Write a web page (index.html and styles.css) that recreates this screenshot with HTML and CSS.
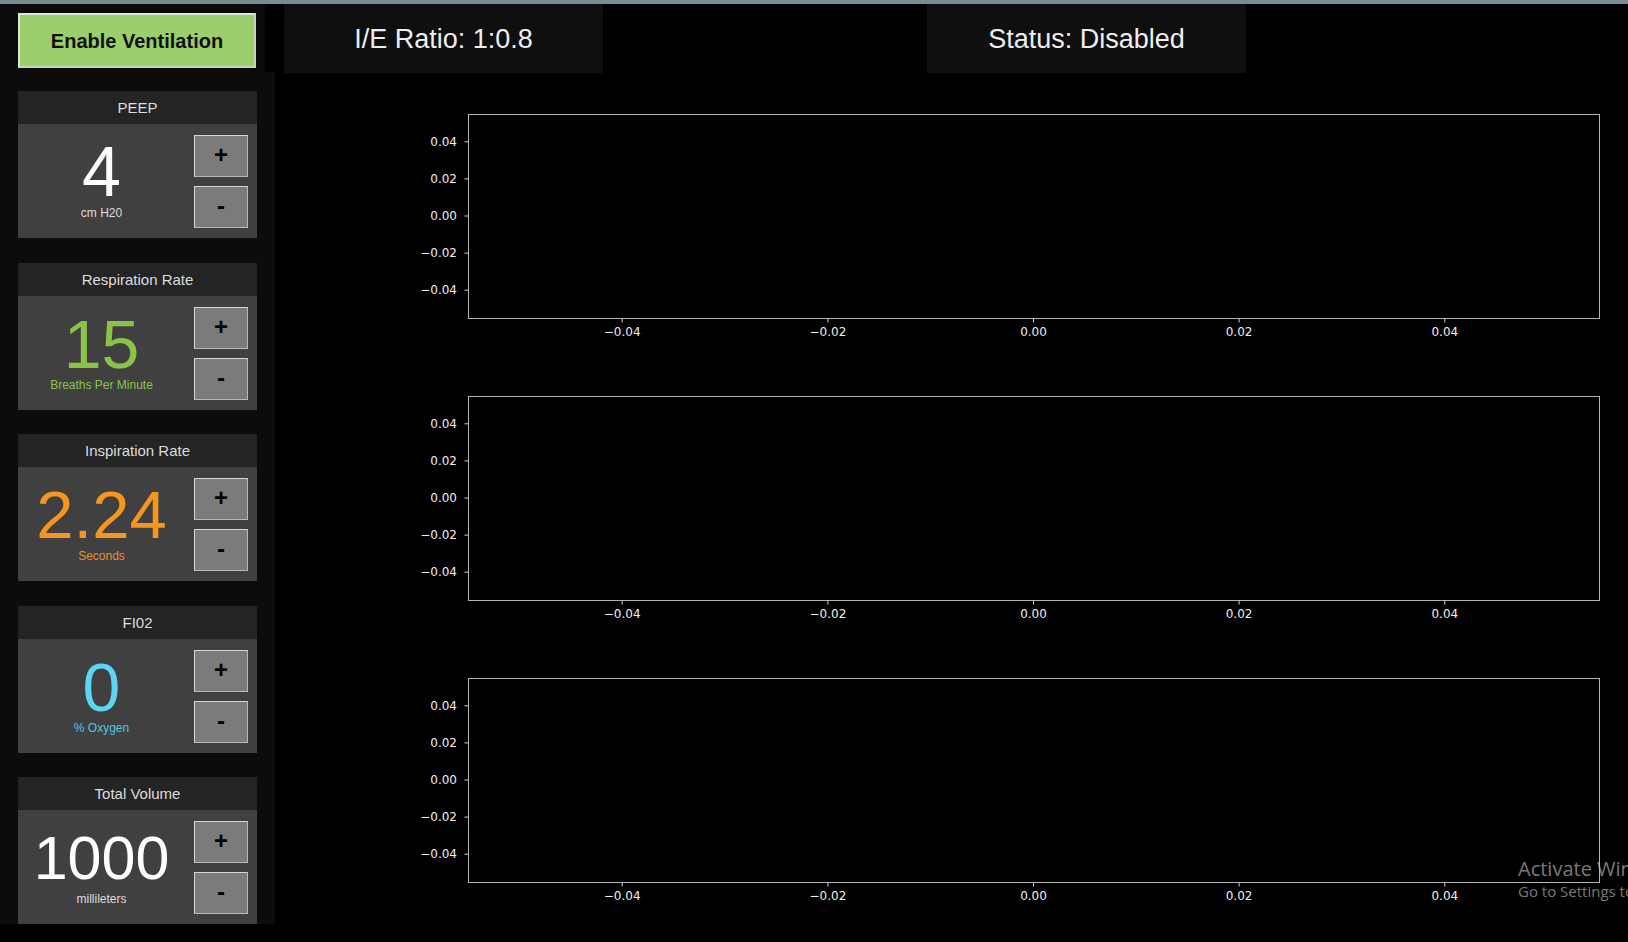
FILE: index.html
```html
<!DOCTYPE html>
<html>
<head>
<meta charset="utf-8">
<title>Ventilator</title>
<link rel="stylesheet" href="styles.css">
</head>
<body>
<div class="app">
  <div class="topline"></div>
  <div class="topbar">
    <div class="enable-wrap"><button class="enable-btn">Enable Ventilation</button></div>
    <div class="info-box ie">I/E Ratio: 1:0.8</div>
    <div class="info-box status">Status: Disabled</div>
  </div>
  <div class="content">
    <aside class="sidebar">
      <div class="card">
        <div class="card-title">PEEP</div>
        <div class="card-body">
          <div class="value white"><div class="num n70">4</div><div class="unit">cm H20</div></div>
          <div class="btns"><button class="step">+</button><button class="step">-</button></div>
        </div>
      </div>
      <div class="card">
        <div class="card-title">Respiration Rate</div>
        <div class="card-body">
          <div class="value green"><div class="num n68">15</div><div class="unit">Breaths Per Minute</div></div>
          <div class="btns"><button class="step">+</button><button class="step">-</button></div>
        </div>
      </div>
      <div class="card">
        <div class="card-title">Inspiration Rate</div>
        <div class="card-body">
          <div class="value orange"><div class="num n67">2.24</div><div class="unit">Seconds</div></div>
          <div class="btns"><button class="step">+</button><button class="step">-</button></div>
        </div>
      </div>
      <div class="card">
        <div class="card-title">FI02</div>
        <div class="card-body">
          <div class="value cyan"><div class="num n68">0</div><div class="unit">% Oxygen</div></div>
          <div class="btns"><button class="step">+</button><button class="step">-</button></div>
        </div>
      </div>
      <div class="card">
        <div class="card-title">Total Volume</div>
        <div class="card-body">
          <div class="value white"><div class="num n61">1000</div><div class="unit">millileters</div></div>
          <div class="btns"><button class="step">+</button><button class="step">-</button></div>
        </div>
      </div>
    </aside>
    <main class="plots">
      <svg class="plot" width="1353" height="282" viewBox="0 0 1353 282">
        <g class="ticks">
          <line x1="189.5" y1="55.8" x2="193.5" y2="55.8"/>
          <line x1="189.5" y1="92.9" x2="193.5" y2="92.9"/>
          <line x1="189.5" y1="130" x2="193.5" y2="130"/>
          <line x1="189.5" y1="167.1" x2="193.5" y2="167.1"/>
          <line x1="189.5" y1="204.2" x2="193.5" y2="204.2"/>
          <line x1="347.2" y1="232.5" x2="347.2" y2="236.5"/>
          <line x1="552.9" y1="232.5" x2="552.9" y2="236.5"/>
          <line x1="758.5" y1="232.5" x2="758.5" y2="236.5"/>
          <line x1="964.1" y1="232.5" x2="964.1" y2="236.5"/>
          <line x1="1169.8" y1="232.5" x2="1169.8" y2="236.5"/>
        </g>
        <rect class="frame" x="193.5" y="28.5" width="1131" height="204"/>
        <g class="ylab">
          <text x="182" y="60">0.04</text>
          <text x="182" y="97">0.02</text>
          <text x="182" y="134">0.00</text>
          <text x="182" y="171">−0.02</text>
          <text x="182" y="208">−0.04</text>
        </g>
        <g class="xlab">
          <text x="347.2" y="250">−0.04</text>
          <text x="552.9" y="250">−0.02</text>
          <text x="758.5" y="250">0.00</text>
          <text x="964.1" y="250">0.02</text>
          <text x="1169.8" y="250">0.04</text>
        </g>
      </svg>
      <svg class="plot" width="1353" height="282" viewBox="0 0 1353 282">
        <g class="ticks">
          <line x1="189.5" y1="55.8" x2="193.5" y2="55.8"/>
          <line x1="189.5" y1="92.9" x2="193.5" y2="92.9"/>
          <line x1="189.5" y1="130" x2="193.5" y2="130"/>
          <line x1="189.5" y1="167.1" x2="193.5" y2="167.1"/>
          <line x1="189.5" y1="204.2" x2="193.5" y2="204.2"/>
          <line x1="347.2" y1="232.5" x2="347.2" y2="236.5"/>
          <line x1="552.9" y1="232.5" x2="552.9" y2="236.5"/>
          <line x1="758.5" y1="232.5" x2="758.5" y2="236.5"/>
          <line x1="964.1" y1="232.5" x2="964.1" y2="236.5"/>
          <line x1="1169.8" y1="232.5" x2="1169.8" y2="236.5"/>
        </g>
        <rect class="frame" x="193.5" y="28.5" width="1131" height="204"/>
        <g class="ylab">
          <text x="182" y="60">0.04</text>
          <text x="182" y="97">0.02</text>
          <text x="182" y="134">0.00</text>
          <text x="182" y="171">−0.02</text>
          <text x="182" y="208">−0.04</text>
        </g>
        <g class="xlab">
          <text x="347.2" y="250">−0.04</text>
          <text x="552.9" y="250">−0.02</text>
          <text x="758.5" y="250">0.00</text>
          <text x="964.1" y="250">0.02</text>
          <text x="1169.8" y="250">0.04</text>
        </g>
      </svg>
      <svg class="plot" width="1353" height="282" viewBox="0 0 1353 282">
        <g class="ticks">
          <line x1="189.5" y1="55.8" x2="193.5" y2="55.8"/>
          <line x1="189.5" y1="92.9" x2="193.5" y2="92.9"/>
          <line x1="189.5" y1="130" x2="193.5" y2="130"/>
          <line x1="189.5" y1="167.1" x2="193.5" y2="167.1"/>
          <line x1="189.5" y1="204.2" x2="193.5" y2="204.2"/>
          <line x1="347.2" y1="232.5" x2="347.2" y2="236.5"/>
          <line x1="552.9" y1="232.5" x2="552.9" y2="236.5"/>
          <line x1="758.5" y1="232.5" x2="758.5" y2="236.5"/>
          <line x1="964.1" y1="232.5" x2="964.1" y2="236.5"/>
          <line x1="1169.8" y1="232.5" x2="1169.8" y2="236.5"/>
        </g>
        <rect class="frame" x="193.5" y="28.5" width="1131" height="204"/>
        <g class="ylab">
          <text x="182" y="60">0.04</text>
          <text x="182" y="97">0.02</text>
          <text x="182" y="134">0.00</text>
          <text x="182" y="171">−0.02</text>
          <text x="182" y="208">−0.04</text>
        </g>
        <g class="xlab">
          <text x="347.2" y="250">−0.04</text>
          <text x="552.9" y="250">−0.02</text>
          <text x="758.5" y="250">0.00</text>
          <text x="964.1" y="250">0.02</text>
          <text x="1169.8" y="250">0.04</text>
        </g>
      </svg>
    </main>
  </div>
</div>
<div class="watermark">
  <div class="wm-title">Activate Windows</div>
  <div class="wm-sub">Go to Settings to activate Windows.</div>
</div>
</body>
</html>
```
FILE: styles.css
```css
html, body {
  margin: 0;
  padding: 0;
  background: #000;
  width: 1628px;
  height: 942px;
  overflow: hidden;
  font-family: "Liberation Sans", Arial, sans-serif;
}

.app {
  display: flex;
  flex-direction: column;
  width: 1628px;
  height: 942px;
}

.topline {
  height: 4px;
  background: #7c8b92;
  flex: none;
}

.topbar {
  display: flex;
  height: 68px;
  flex: none;
}

.enable-wrap {
  width: 265px;
  background: #0b0b0b;
  box-sizing: border-box;
  padding: 9px 0 0 18px;
}

.enable-btn {
  display: block;
  width: 238px;
  height: 55px;
  margin: 0;
  padding: 2px 0 0 0;
  background: #9dce6d;
  border: 2px solid #dfe8d8;
  border-right-color: #c6d4bd;
  border-bottom-color: #c6d4bd;
  font-family: "Liberation Sans", Arial, sans-serif;
  font-weight: bold;
  font-size: 20px;
  color: #111;
  box-sizing: border-box;
}

.info-box {
  width: 319px;
  height: 69px;
  background: #0f0f0f;
  color: #eeeeee;
  font-size: 27px;
  display: flex;
  align-items: center;
  justify-content: center;
  padding-top: 1px;
  box-sizing: border-box;
}

.info-box.ie {
  margin-left: 19px;
}

.info-box.status {
  margin-left: 324px;
}

.content {
  display: flex;
  flex: 1;
  min-height: 0;
}

.sidebar {
  width: 275px;
  height: 852px;
  flex: none;
  background: #0c0c0c;
  box-sizing: border-box;
  padding: 19px 0 0 18px;
  display: flex;
  flex-direction: column;
  gap: 24.5px;
}

.card {
  width: 239px;
  height: 147px;
  display: flex;
  flex-direction: column;
  flex: none;
}

.card-title {
  height: 33px;
  background: #242424;
  color: #dddddd;
  font-size: 15px;
  display: flex;
  align-items: center;
  justify-content: center;
  flex: none;
}

.card-body {
  flex: 1;
  background: #404040;
  display: flex;
  box-sizing: border-box;
  padding: 0 9px 0 0;
}

.value {
  width: 167px;
  display: flex;
  flex-direction: column;
  align-items: center;
  justify-content: center;
  padding-top: 1px;
}

.num {
  line-height: 60px;
  height: 60px;
  letter-spacing: 0;
}

.n70 { font-size: 70px; }
.n68 { font-size: 68px; }
.n67 { font-size: 67px; }
.n61 { font-size: 61px; }

.unit {
  font-size: 12px;
  line-height: 16px;
  margin-top: 3px;
}

.white .num { color: #ffffff; }
.white .unit { color: #dddddd; }
.green .num { color: #8bc34a; }
.green .unit { color: #8bc34a; }
.orange .num { color: #f7961f; }
.orange .unit { color: #e8922a; }
.cyan .num { color: #5dd5f4; }
.cyan .unit { color: #4fc6e6; }

.btns {
  margin-left: 9px;
  padding-top: 11px;
  display: flex;
  flex-direction: column;
  gap: 9px;
}

.step {
  width: 54px;
  height: 42px;
  margin: 0;
  padding: 0 0 2px 0;
  background: #7b7b7b;
  border: 1px solid #d6d6d6;
  border-right-color: #b9b9b9;
  border-bottom-color: #b9b9b9;
  box-sizing: border-box;
  font-family: "Liberation Sans", Arial, sans-serif;
  font-weight: bold;
  font-size: 24px;
  line-height: 1;
  color: #000;
}

.plots {
  flex: 1;
  display: flex;
  flex-direction: column;
  padding-top: 14px;
}

.plot {
  display: block;
  flex: none;
}

.plot .frame {
  fill: #000;
  stroke: #b4b4b4;
  stroke-width: 1;
  shape-rendering: crispEdges;
}

.plot .ticks line {
  stroke: #cfcfcf;
  stroke-width: 1;
}

.plot text {
  font-family: "DejaVu Sans", sans-serif;
  font-size: 12px;
  fill: #eeeeee;
}

.plot .ylab text {
  text-anchor: end;
}

.plot .xlab text {
  text-anchor: middle;
}

.watermark {
  position: absolute;
  left: 1518px;
  top: 857px;
  white-space: nowrap;
  color: rgba(200, 200, 200, 0.62);
  font-family: "Open Sans", "Noto Sans", sans-serif;
}

.wm-title {
  font-size: 20px;
  line-height: 24px;
}

.wm-sub {
  font-size: 15px;
  line-height: 20px;
}
```
